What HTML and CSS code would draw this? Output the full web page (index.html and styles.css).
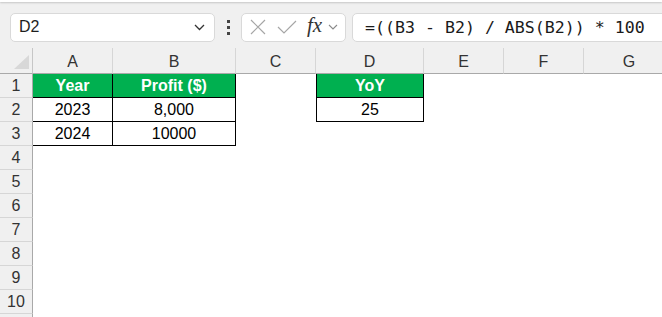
FILE: index.html
```html
<!DOCTYPE html>
<html lang="en">
<head>
    <meta charset="UTF-8">
    <title>Sheet1</title>
    <link rel="stylesheet" href="styles.css">
</head>
<body>
    <div class="ribbon-edge"></div>

    <div class="formula-bar">
        <div class="name-box">
            <span>D2</span>
            <svg class="chev" width="11" height="7" viewBox="0 0 11 7"><path d="M1 1 L5.5 5.5 L10 1" fill="none" stroke="#333" stroke-width="1.3"/></svg>
        </div>
        <div class="dots"><i></i><i></i><i></i></div>
        <div class="fx-box">
            <svg width="16" height="16" viewBox="0 0 16 16"><path d="M1 1 L15 15 M15 1 L1 15" stroke="#a6a6a6" stroke-width="1.2"/></svg>
            <svg width="20" height="14" viewBox="0 0 20 14"><path d="M1 7 L7 13 L19 1" fill="none" stroke="#a6a6a6" stroke-width="1.2"/></svg>
            <span class="fx">fx</span>
            <svg class="chev-sm" width="10" height="6" viewBox="0 0 10 6"><path d="M1 1 L5 5 L9 1" fill="none" stroke="#8a8a8a" stroke-width="1.1"/></svg>
        </div>
        <div class="formula">=((B3 - B2) / ABS(B2)) * 100</div>
    </div>

    <div class="sheet">
        <div class="corner"><span class="tri"></span></div>
        <div class="col-head">A</div>
        <div class="col-head">B</div>
        <div class="col-head">C</div>
        <div class="col-head">D</div>
        <div class="col-head">E</div>
        <div class="col-head">F</div>
        <div class="col-head last">G</div>

        <div class="row-head">1</div>
        <div class="cell head">Year</div>
        <div class="cell head">Profit ($)</div>
        <div class="cell"></div>
        <div class="cell head left">YoY</div>
        <div class="cell"></div><div class="cell"></div><div class="cell"></div>

        <div class="row-head">2</div>
        <div class="cell box">2023</div>
        <div class="cell box">8,000</div>
        <div class="cell"></div>
        <div class="cell box left">25</div>
        <div class="cell"></div><div class="cell"></div><div class="cell"></div>

        <div class="row-head">3</div>
        <div class="cell box">2024</div>
        <div class="cell box">10000</div>
        <div class="cell"></div><div class="cell"></div>
        <div class="cell"></div><div class="cell"></div><div class="cell"></div>

        <div class="row-head">4</div><div class="blank"></div>
        <div class="row-head">5</div><div class="blank"></div>
        <div class="row-head">6</div><div class="blank"></div>
        <div class="row-head">7</div><div class="blank"></div>
        <div class="row-head">8</div><div class="blank"></div>
        <div class="row-head">9</div><div class="blank"></div>
        <div class="row-head">10</div><div class="blank"></div>
        <div class="row-head"></div><div class="blank"></div>
    </div>
</body>
</html>
```

FILE: styles.css
```css
body {
    margin: 0;
    background-color: #f0f0f0;
    font-family: "Liberation Sans", Arial, sans-serif;
    overflow: hidden;
    width: 662px;
    height: 317px;
}
.ribbon-edge {
    height: 2px;
    background: #fff;
    box-shadow: 0 1px 2px rgba(0,0,0,0.18);
}
.formula-bar {
    display: flex;
    align-items: center;
    height: 46px;
    padding: 4px 0 0 10px;
    box-sizing: border-box;
}
.name-box,
.fx-box,
.formula {
    height: 29px;
    box-sizing: border-box;
    background: #fff;
    border: 1px solid #d9d9d9;
    border-radius: 5px;
    display: flex;
    align-items: center;
}
.name-box {
    width: 205px;
    padding: 0 9px 0 8px;
    justify-content: space-between;
    font-size: 16px;
    color: #1e1e1e;
}
.dots {
    display: flex;
    flex-direction: column;
    gap: 3px;
    margin: 0 11px 0 12px;
}
.dots i {
    display: block;
    width: 3px;
    height: 3px;
    background: #444;
}
.fx-box {
    width: 105px;
    padding: 0 4px 0 8px;
}
.fx-box svg:first-child {
    margin-right: 11px;
}
.fx {
    font-family: "Liberation Serif", serif;
    font-style: italic;
    font-size: 21px;
    color: #333;
    margin-left: 10px;
    margin-right: 6px;
    line-height: 1;
    position: relative;
    top: -2px;
}
.formula {
    flex: 1;
    margin-left: 6px;
    margin-right: -10px;
    padding-left: 12px;
    font-family: "DejaVu Sans Mono", "Liberation Mono", monospace;
    font-size: 16.6px;
    color: #1a1a1a;
    border-radius: 5px 0 0 5px;
}
.sheet {
    display: grid;
    grid-template-columns: 33px 80px 123px 80px 108px 80px 80px 90px;
    grid-template-rows: 26px repeat(11, 24px);
    background: #fff;
    font-size: 16px;
}
.corner {
    background: #f0f0f0;
    border-right: 1px solid #c6c6c6;
    border-bottom: 1px solid #a9a9a9;
    position: relative;
}
.tri {
    position: absolute;
    right: 3px;
    bottom: 4px;
    width: 0;
    height: 0;
    border-left: 15px solid transparent;
    border-bottom: 14px solid #d8d8d8;
}
.col-head {
    background: #f0f0f0;
    border-right: 1px solid #d6d6d6;
    border-bottom: 1px solid #a9a9a9;
    color: #333;
    display: flex;
    align-items: center;
    justify-content: center;
    padding-top: 2px;
}
.col-head.last {
    border-right: none;
}
.row-head {
    background: #f0f0f0;
    border-right: 1px solid #a9a9a9;
    border-bottom: 1px solid #d6d6d6;
    color: #333;
    display: flex;
    align-items: center;
    justify-content: center;
}
.cell {
    box-sizing: border-box;
    display: flex;
    align-items: center;
    justify-content: center;
    color: #000;
}
.blank {
    grid-column: 2 / -1;
}
.cell.head {
    background: #00b050;
    color: #fff;
    font-weight: bold;
    border-right: 1px solid #000;
    border-bottom: 1px solid #000;
}
.cell.box {
    border-right: 1px solid #000;
    border-bottom: 1px solid #000;
}
.cell.left {
    border-left: 1px solid #000;
}
```
